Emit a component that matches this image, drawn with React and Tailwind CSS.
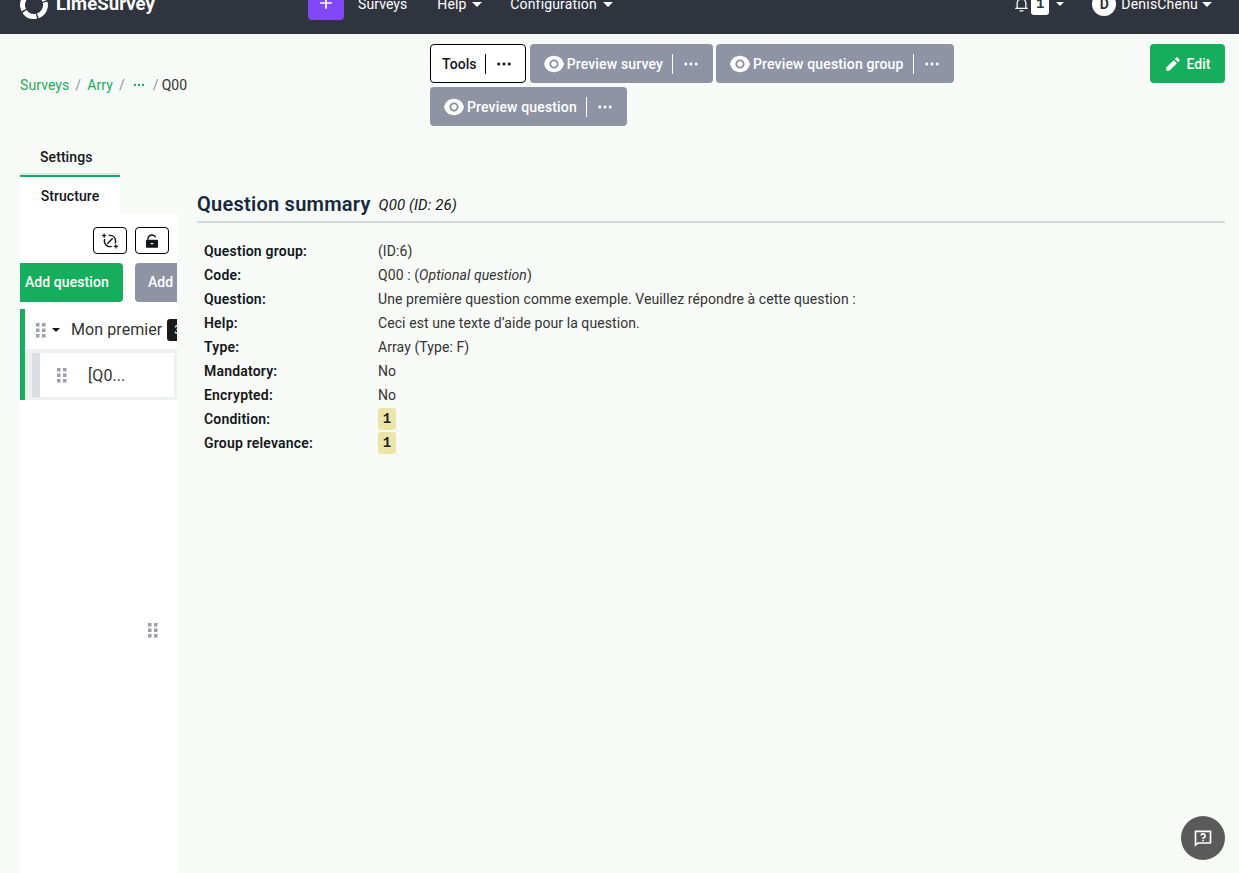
import React from "react";
import {
  RiAddLine,
  RiEyeFill,
  RiLockUnlockFill,
  RiMoreFill,
  RiNotification3Line,
  RiPencilFill,
  RiQuestionnaireLine,
} from "react-icons/ri";

const summary = [
  ["Question group:", "(ID:6)"],
  ["Code:", <>Q00 : (<i>Optional question</i>)</>],
  ["Question:", "Une première question comme exemple. Veuillez répondre à cette question :"],
  ["Help:", "Ceci est une texte d’aide pour la question."],
  ["Type:", "Array (Type: F)"],
  ["Mandatory:", "No"],
  ["Encrypted:", "No"],
  ["Condition:", <Expr />],
  ["Group relevance:", <Expr />],
];

function Expr() {
  return (
    <span className="flex h-[22px] w-[18px] items-center justify-center rounded-[3px] bg-[#ebe5a8] font-['Liberation_Mono',monospace] font-bold text-[#222]">
      1
    </span>
  );
}

function Caret({ className }) {
  return (
    <span
      className={
        "inline-block border-x-[5px] border-t-[5px] border-x-transparent " +
        className
      }
    />
  );
}

// the little 2x3 grip, squares rather than round dots
function Grip({ className = "" }) {
  return (
    <svg viewBox="0 0 10 15" className={"h-[15px] w-[10px] shrink-0 " + className}>
      {[0, 6].map((x) =>
        [0, 5.5, 11].map((y) => (
          <rect key={x + "-" + y} x={x} y={y} width="3.5" height="3.5" fill="#9a9eb0" />
        )),
      )}
    </svg>
  );
}

function SyncIcon() {
  return (
    <svg viewBox="0 0 16 16" className="h-[18px] w-[18px]" fill="none" stroke="currentColor" strokeWidth="1.3">
      <circle cx="8" cy="8" r="5" strokeDasharray="11 4.7" transform="rotate(72 8 8)" />
      <path d="M5.6 10.4 10.4 5.6" />
      <path d="M1 3.2h3.6M2.8 1.4v3.6M11.4 12.8H15M13.2 11v3.6" strokeWidth="1.1" />
    </svg>
  );
}

function SplitButton({ label, dark }) {
  if (dark) {
    return (
      <div className="mr-px flex h-[39px] items-center rounded-[4px] border border-black bg-white pl-[11px] pr-[12px] text-[#14171a]">
        <span className="pt-px">{label}</span>
        <span className="ml-[8px] mr-[9px] h-[20px] w-px bg-black" />
        <RiMoreFill className="h-[18px] w-[18px]" />
      </div>
    );
  }
  return (
    <div className="flex h-[39px] items-center rounded-[4px] bg-[#8f94a5] pl-[13px] pr-[13px] text-white">
      <RiEyeFill className="mr-[2px] h-[22px] w-[22px]" />
      <span className="pt-px tracking-[0.15px]">{label}</span>
      <span className="mx-[9px] h-[20px] w-px bg-white" />
      <RiMoreFill className="h-[18px] w-[18px]" />
    </div>
  );
}

export default function App() {
  return (
    <div className="h-[873px] overflow-hidden bg-[#f8faf8] font-['Roboto',sans-serif] text-[14px] tracking-[0.08px] text-[#14171a]">
      {/* navbar, page is scrolled a bit so the top is cut */}
      <div className="h-[34px] overflow-hidden bg-[#30343f]">
        <div className="-mt-[26px] flex h-[60px] items-center text-white">
          <div className="ml-5 flex w-[288px] items-center pt-[2px]">
            <svg viewBox="0 0 28 28" className="h-[28px] w-[28px] -rotate-[15deg]">
              <circle
                cx="14"
                cy="14"
                r="11.5"
                fill="none"
                stroke="white"
                strokeWidth="5"
                strokeDasharray="17 1.5 13.5 1.5 37 1.8"
              />
            </svg>
            <span className="ml-2 text-[18.5px] font-bold">LimeSurvey</span>
          </div>
          <div className="flex h-[46px] w-[36px] items-center justify-center self-start rounded-[4px] bg-[#8146f6] pt-[12px]">
            <RiAddLine className="h-5 w-5" />
          </div>
          <span className="ml-[14px]">Surveys</span>
          <span className="ml-[30px]">Help</span>
          <Caret className="ml-[6px] border-t-white" />
          <span className="ml-[28px] tracking-[0.15px]">Configuration</span>
          <Caret className="ml-[6px] border-t-white" />
          <div className="ml-auto flex items-center">
            <RiNotification3Line className="h-[15px] w-[15px]" />
            <span className="ml-[2px] flex h-[22px] w-[18px] items-center justify-center rounded-[3px] bg-white font-['Liberation_Mono',monospace] font-bold text-[#30343f]">
              1
            </span>
            <span className="ml-[7px] inline-block border-x-[4px] border-t-[4px] border-x-transparent border-t-white" />
            <span className="ml-[28px] flex h-6 w-6 items-center justify-center rounded-full bg-white font-bold text-[#30343f]">
              D
            </span>
            <span className="ml-[5px] tracking-[0.2px]">DenisChenu</span>
            <Caret className="ml-[4px] mr-[27px] border-t-white" />
          </div>
        </div>
      </div>

      {/* top bar */}
      <div className="flex items-start pl-5 pr-[14px] pt-[10px]">
        <div className="flex w-[410px] items-center pt-[31px] leading-[20px]">
          <span className="text-[#14ae5c]">Surveys</span>
          <span className="mx-[6px] text-[#8f94a5]">/</span>
          <span className="text-[#14ae5c]">Arry</span>
          <span className="mx-[6px] text-[#8f94a5]">/</span>
          <RiMoreFill className="mx-px h-[14px] w-[14px] text-[#14ae5c]" />
          <span className="ml-[6px] mr-[3px] text-[#8f94a5]">/</span>
          <span className="text-[#333]">Q00</span>
        </div>
        <div className="flex w-[530px] flex-wrap gap-x-[3px] gap-y-[4px] font-medium">
          <SplitButton label="Tools" dark />
          <SplitButton label="Preview survey" />
          <SplitButton label="Preview question group" />
          <SplitButton label="Preview question" />
        </div>
        <div className="ml-auto flex h-[39px] w-[75px] items-center justify-center rounded-[4px] bg-[#14ae5c] pt-px font-medium text-white">
          <RiPencilFill className="mr-[4px] h-[18px] w-[18px]" />
          Edit
        </div>
      </div>

      {/* sidebar + content */}
      <div className="mt-[10px] flex pl-5 pr-[14px]">
        <div className="w-[157px] shrink-0">
          <div className="flex h-[39px] w-[100px] items-center border-b-2 border-[#e1e3e8] pl-5 pt-[6px] font-medium">
            Settings
          </div>
          <div className="flex h-[39px] w-[100px] items-center justify-center border-t-2 border-[#14ae5c] bg-white pt-[2px] font-medium">
            Structure
          </div>
          <div className="h-[659px] overflow-hidden bg-white">
            <div className="flex justify-end gap-2 pr-2 pt-[13px]">
              <span className="flex h-[27px] w-[34px] items-center justify-center rounded-[4px] border border-black">
                <SyncIcon />
              </span>
              <span className="flex h-[27px] w-[34px] items-center justify-center rounded-[4px] border border-black">
                <RiLockUnlockFill className="h-4 w-4" />
              </span>
            </div>
            <div className="mt-[9px] flex w-[170px] gap-3 font-medium text-white">
              <span className="flex h-[39px] w-[103px] items-center whitespace-nowrap rounded-r-[4px] bg-[#14ae5c] pl-[5px]">
                Add question
              </span>
              <span className="flex h-[39px] w-[55px] items-center rounded-[4px] bg-[#8f94a5] pl-[13px]">
                Add
              </span>
            </div>
            <div className="mt-[7px] border-l-[5px] border-[#14ae5c]">
              <div className="flex h-[42px] items-center border-b-2 border-[#eeeff3] pt-[2px] text-[16px] text-[#333]">
                <Grip className="ml-[11px]" />
                <span className="ml-[6px] inline-block border-x-[4px] border-t-[4px] border-x-transparent border-t-[#14171a]" />
                <span className="ml-[11px] whitespace-nowrap">Mon premier</span>
                <span className="ml-[5px] flex h-[22px] w-4 shrink-0 items-center overflow-hidden rounded-[3px] bg-[#1a1a1a] pl-[7px] text-[12px] text-white">
                  3
                </span>
              </div>
              <div className="flex h-[49px] bg-[#eeeff3] pb-[3px] pl-[7px] pt-[2px]">
                <div className="flex w-[142px] items-center border-l-[8px] border-[#dcdde3] bg-white pt-px text-[16px] text-[#333]">
                  <Grip className="ml-[17px]" />
                  <span className="ml-[21px]">[Q0...</span>
                </div>
              </div>
            </div>
            <div className="mt-[223px] flex justify-end pr-[19px]">
              <Grip />
            </div>
          </div>
        </div>

        <div className="ml-5 flex-1 pt-[48px]">
          <div className="flex h-[39px] items-center gap-2 border-b-2 border-[#d5d8dc] pt-[3px]">
            <span className="text-[20px] font-semibold tracking-[0.25px] text-[#14293d]">
              Question summary
            </span>
            <span className="pt-[2px] text-[15px] italic">Q00 (ID: 26)</span>
          </div>
          <div className="mt-[16px] pl-[7px] text-[#333]">
            {summary.map(([label, value]) => (
              <div key={label} className="flex h-[24px] items-center">
                <span className="w-[174px] font-semibold tracking-[0.2px] text-[#14171a]">{label}</span>
                <span>{value}</span>
              </div>
            ))}
          </div>
        </div>
      </div>

      {/* help bubble */}
      <div className="absolute left-[1181px] top-[816px] flex h-11 w-11 items-center justify-center rounded-full bg-[#5a5a5a] text-white">
        <RiQuestionnaireLine className="h-[20px] w-[20px]" />
      </div>
    </div>
  );
}
